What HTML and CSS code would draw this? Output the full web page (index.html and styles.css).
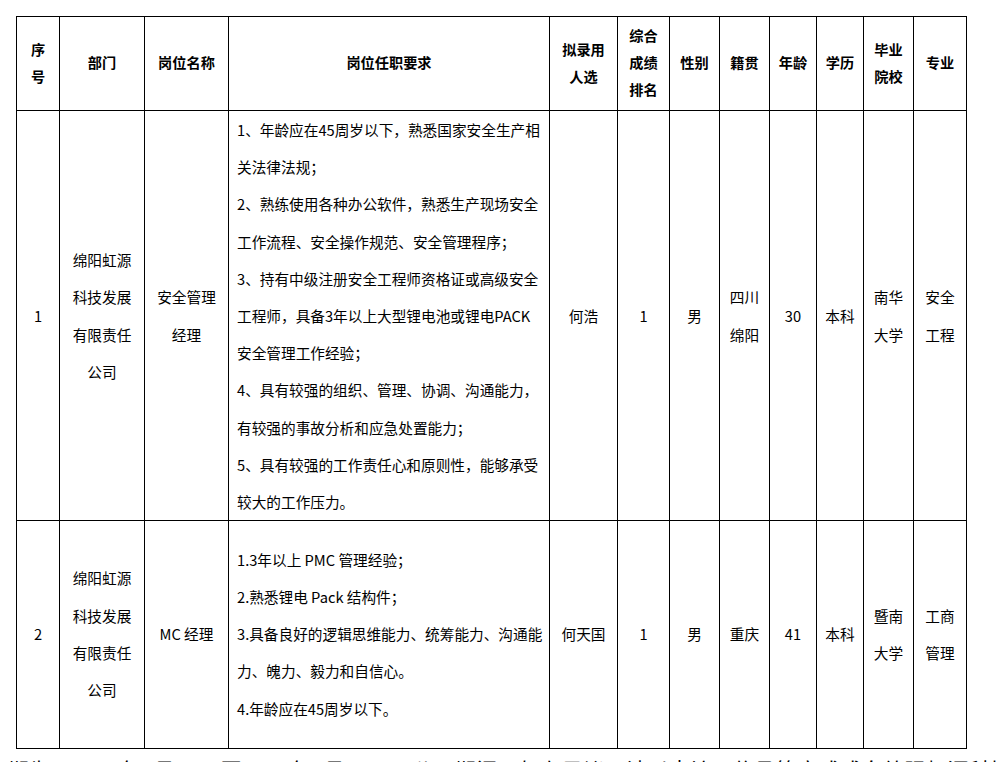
FILE: index.html
```html
<!DOCTYPE html>
<html lang="zh-CN">
<head>
<meta charset="utf-8">
<title>拟录用人员公示</title>
<link rel="stylesheet" href="styles.css">
</head>
<body>
<div class="page">
  <table class="grid">
    <colgroup>
      <col class="c-no"><col class="c-dept"><col class="c-pos"><col class="c-req">
      <col class="c-name"><col class="c-rank"><col class="c-sex"><col class="c-home">
      <col class="c-age"><col class="c-edu"><col class="c-school"><col class="c-major">
    </colgroup>
    <thead>
      <tr class="head-row">
        <th>序<br>号</th>
        <th>部门</th>
        <th>岗位名称</th>
        <th>岗位任职要求</th>
        <th>拟录用<br>人选</th>
        <th>综合<br>成绩<br>排名</th>
        <th>性别</th>
        <th>籍贯</th>
        <th>年龄</th>
        <th>学历</th>
        <th>毕业<br>院校</th>
        <th>专业</th>
      </tr>
    </thead>
    <tbody>
      <tr class="row-one">
        <td>1</td>
        <td>绵阳虹源<br>科技发展<br>有限责任<br>公司</td>
        <td>安全管理<br>经理</td>
        <td class="req">1、年龄应在45周岁以下，熟悉国家安全生产相<br>关法律法规；<br>2、熟练使用各种办公软件，熟悉生产现场安全<br>工作流程、安全操作规范、安全管理程序；<br>3、持有中级注册安全工程师资格证或高级安全<br>工程师，具备3年以上大型锂电池或锂电PACK<br>安全管理工作经验；<br>4、具有较强的组织、管理、协调、沟通能力，<br>有较强的事故分析和应急处置能力；<br>5、具有较强的工作责任心和原则性，能够承受<br>较大的工作压力。</td>
        <td>何浩</td>
        <td>1</td>
        <td>男</td>
        <td>四川<br>绵阳</td>
        <td>30</td>
        <td>本科</td>
        <td>南华<br>大学</td>
        <td>安全<br>工程</td>
      </tr>
      <tr class="row-two">
        <td>2</td>
        <td>绵阳虹源<br>科技发展<br>有限责任<br>公司</td>
        <td>MC 经理</td>
        <td class="req">1.3年以上 PMC 管理经验；<br>2.熟悉锂电 Pack 结构件；<br>3.具备良好的逻辑思维能力、统筹能力、沟通能<br>力、魄力、毅力和自信心。<br>4.年龄应在45周岁以下。</td>
        <td>何天国</td>
        <td>1</td>
        <td>男</td>
        <td>重庆</td>
        <td>41</td>
        <td>本科</td>
        <td>暨南<br>大学</td>
        <td>工商<br>管理</td>
      </tr>
    </tbody>
  </table>
  <p class="notice">期为：2025年9月17日至2025年9月19日，公示期间，如有异议，请以来访、信函等方式或向绵阳虹源科技发展有限责任公司反映。</p>
</div>
</body>
</html>
```

FILE: styles.css
```css
html, body {
  margin: 0;
  padding: 0;
  background: #ffffff;
}

body {
  font-family: "Noto Sans CJK SC", "Noto Sans", sans-serif;
  color: #000000;
  overflow: hidden;
  width: 1000px;
  height: 762px;
}

.page {
  padding: 16px 0 0 16px;
  width: 984px;
  height: 746px;
  overflow: hidden;
}

.grid {
  border-collapse: collapse;
  table-layout: fixed;
  width: 951px;
}

.c-no { width: 43px; }
.c-dept { width: 85px; }
.c-pos { width: 84px; }
.c-req { width: 321px; }
.c-name { width: 68px; }
.c-rank { width: 52px; }
.c-sex { width: 50px; }
.c-home { width: 50px; }
.c-age { width: 47px; }
.c-edu { width: 47px; }
.c-school { width: 50px; }
.c-major { width: 53px; }

.grid th,
.grid td {
  border: 1px solid #000000;
  padding: 0;
  text-align: center;
  vertical-align: middle;
  white-space: nowrap;
}

.grid th {
  font-size: 14.2px;
  font-weight: 700;
  line-height: 27px;
  padding-bottom: 2px;
}

.head-row th {
  height: 91px;
}

.grid td {
  font-size: 14.67px;
  font-weight: 400;
  line-height: 37.2px;
}

.grid td.req {
  text-align: left;
  padding: 0 8px;
}

.row-two td {
  height: 225px;
  padding-bottom: 2px;
}

.row-two td.req {
  padding-bottom: 2px;
}

.notice {
  margin: 8px 0 0 -8px;
  font-size: 21px;
  line-height: 25px;
  letter-spacing: 0.4px;
  white-space: nowrap;
}
```
